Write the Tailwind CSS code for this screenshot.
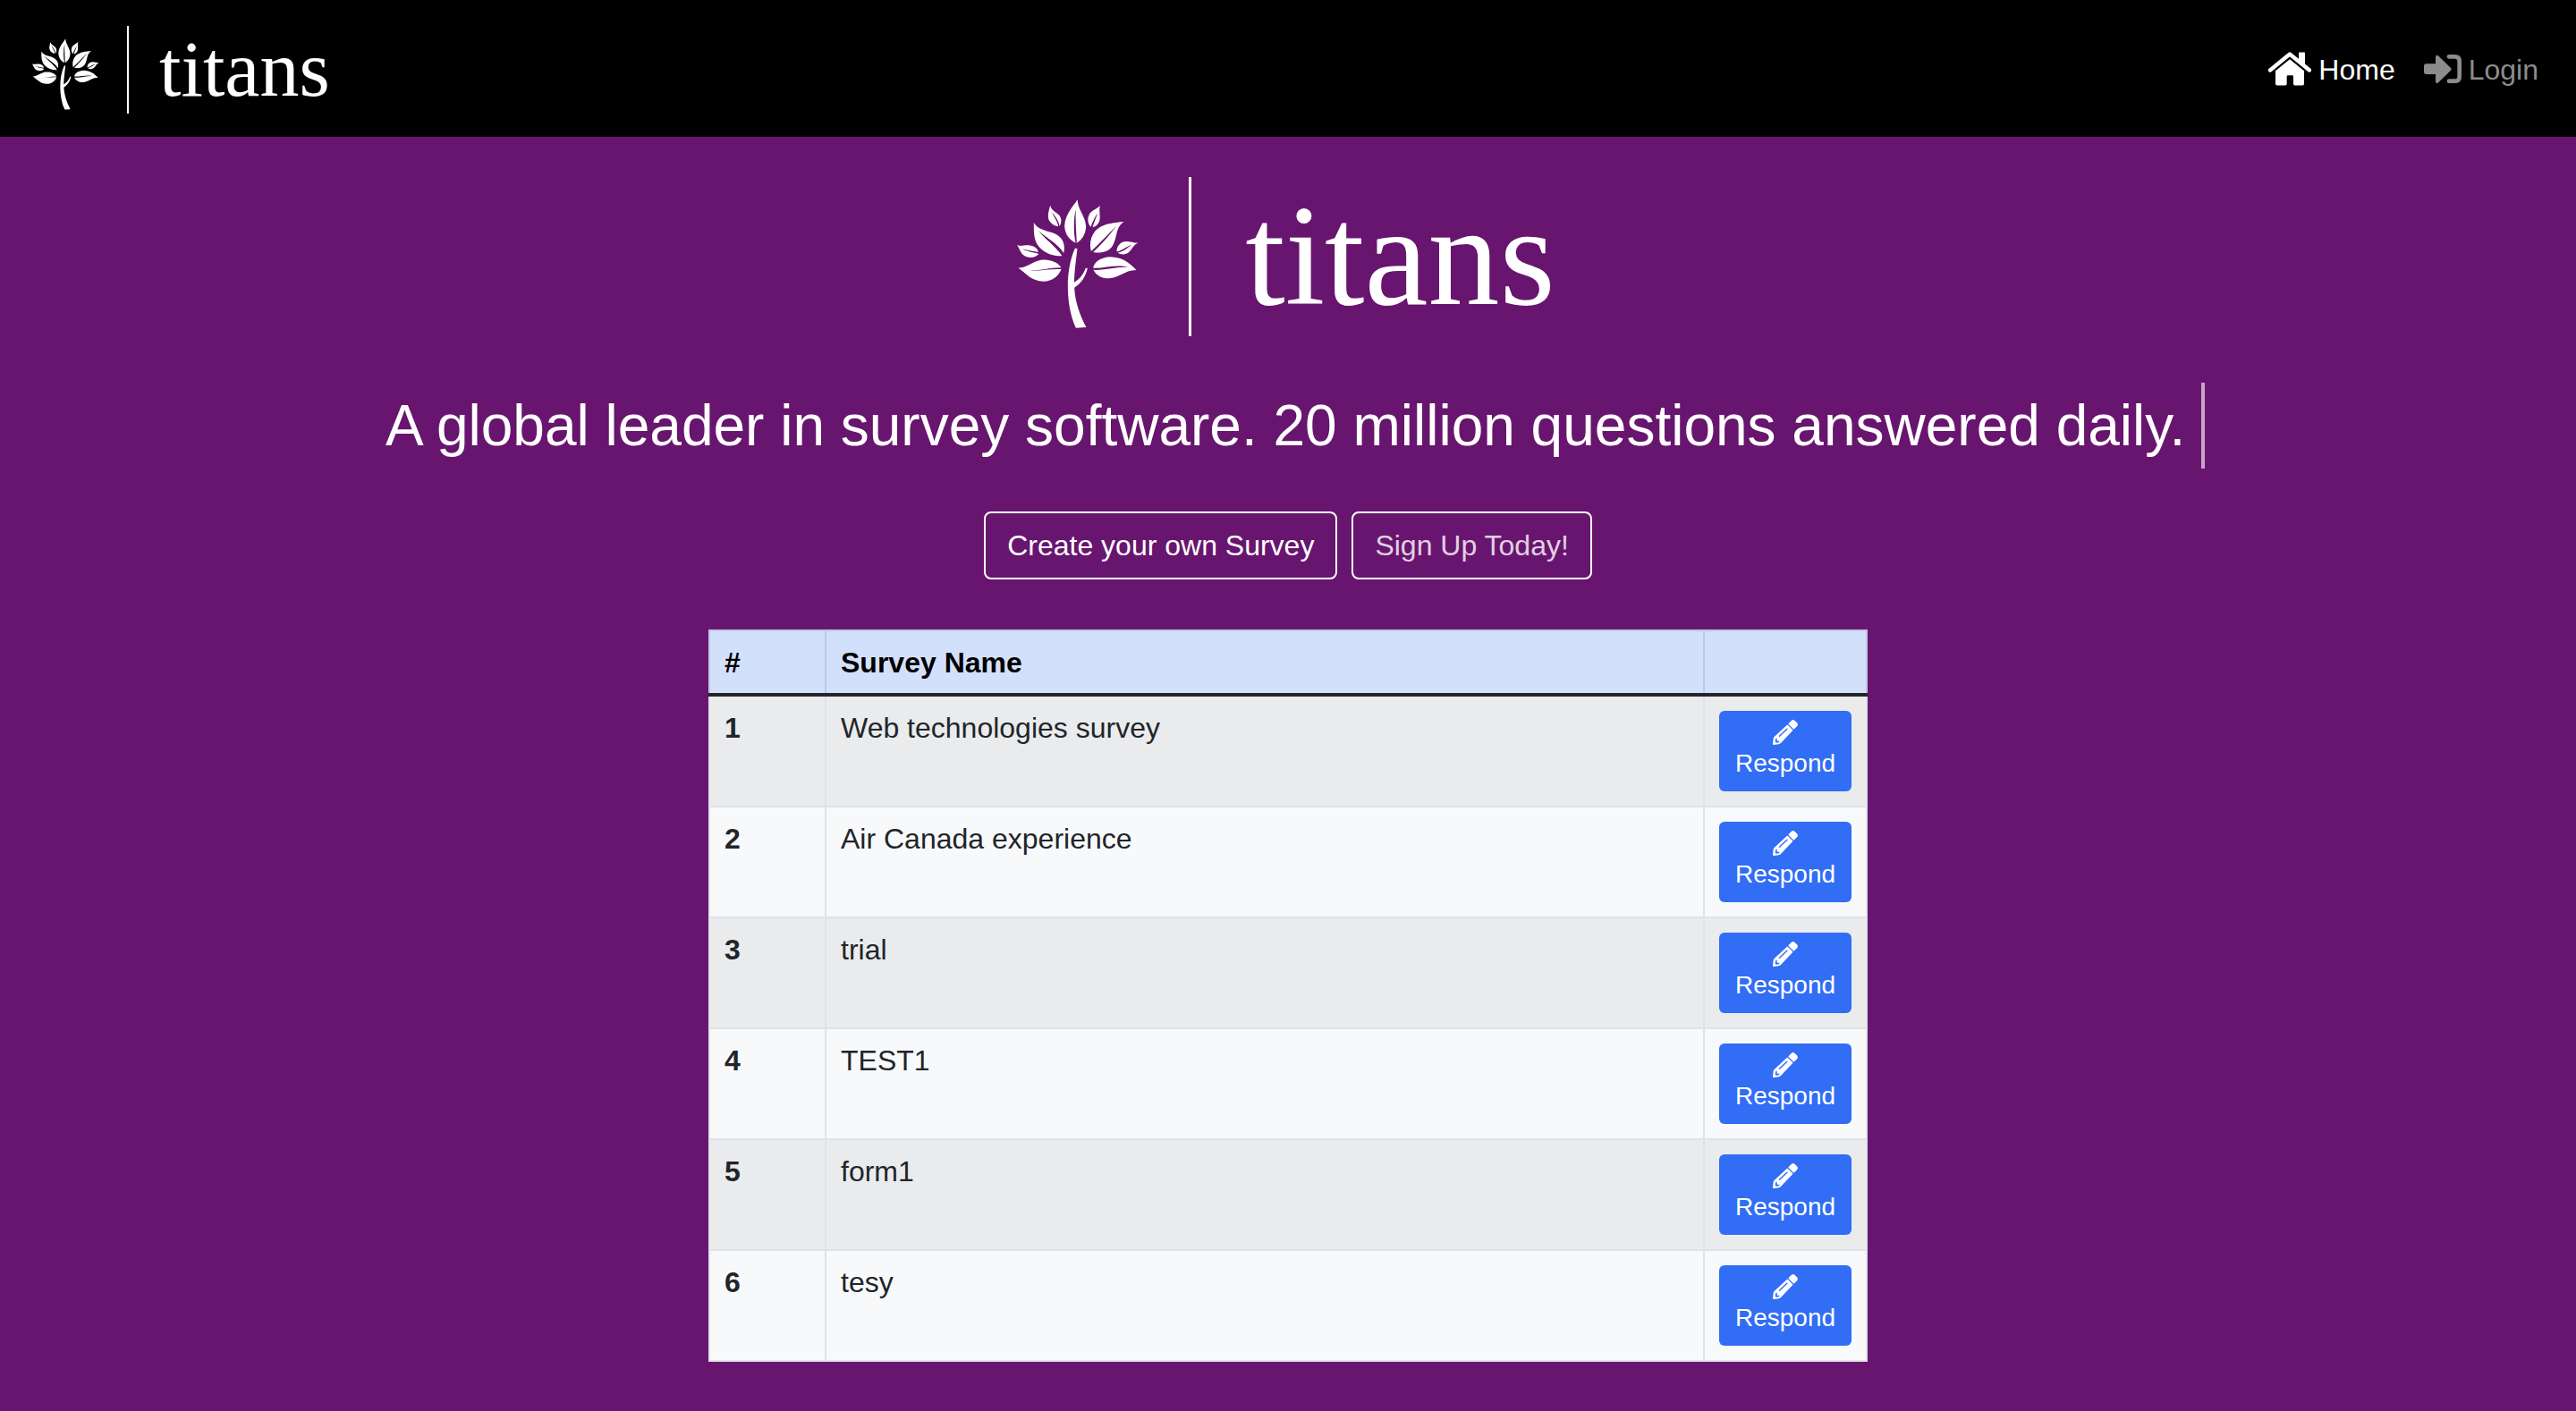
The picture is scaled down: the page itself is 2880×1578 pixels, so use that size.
<!DOCTYPE html>
<html lang="en">
<head>
<meta charset="utf-8">
<title>titans</title>
<script src="https://cdn.jsdelivr.net/npm/@tailwindcss/browser@4"></script>
</head>
<body class="min-h-screen bg-[#68156f] font-['Liberation_Sans',Arial,sans-serif] text-[32px] leading-[48px] text-[#212529]">

<svg class="hidden" aria-hidden="true">
  <symbol id="tree" viewBox="50 40 407 432">
    <g fill="#fff">
      <path d="M252 40C244 58 212 84 209 128C210 158 226 176 246 186C238 146 240 98 247 74C245 104 248 150 250 186C268 176 280 156 281 130C279 96 254 76 252 40Z"/>
      <path d="M161 60C156 78 150 98 158 112C164 122 176 129 188 131C186 112 172 98 167 84C178 96 190 112 192 130C200 118 200 104 190 92C180 82 164 76 161 60Z"/>
      <path d="M328 61C318 72 300 76 292 90C284 106 288 122 297 132C302 116 312 98 320 86C316 100 308 116 303 133C314 132 324 122 327 108C329 92 324 78 328 61Z"/>
      <path d="M106 118C106 146 104 176 124 200C144 222 172 231 201 230C180 196 138 170 122 144C142 166 186 186 206 220C212 196 206 172 182 158C156 144 122 146 106 118Z"/>
      <path d="M408 115C376 118 336 120 312 146C296 166 292 190 298 214C320 194 352 160 382 130C362 158 330 194 305 217C330 222 358 216 370 196C388 164 378 136 408 115Z"/>
      <path d="M50 193C60 208 62 226 82 233C98 238 112 234 123 223C106 218 84 216 68 206C86 212 106 214 121 217C118 200 100 194 84 194C70 194 62 198 50 193Z"/>
      <path d="M456 186C438 186 418 176 402 184C388 192 384 204 384 215C402 212 416 198 434 192C420 204 406 214 388 219C398 226 414 226 424 218C438 206 440 192 456 186Z"/>
      <path d="M54 270C84 268 98 250 130 243C162 240 188 252 198 269C160 268 118 282 82 278C120 282 160 272 198 274C190 296 170 315 138 315C98 314 80 288 54 270Z"/>
      <path d="M450 277C426 252 402 234 362 233C332 234 308 250 305 270C344 272 384 256 424 268C384 264 346 280 306 276C314 294 334 306 360 305C398 300 410 278 450 277Z"/>
      <path d="M244 204L252 205C248 240 242 280 241 318C262 306 272 290 280 270L286 271C280 300 264 322 242 336C244 384 262 432 282 469L247 471C228 430 220 380 220 330C220 284 228 240 244 204Z"/>
    </g>
  </symbol>
  <symbol id="pencil" viewBox="0 0 84 84">
    <path fill="currentColor" fill-rule="evenodd" d="M53 12L63 2Q68 -2 73 2L81 10Q86 15 82 21L72 31Q70 32 69 31L53 15Q52 13 53 12ZM47 18Q49 16 51 18L66 33Q68 35 66 37L27 78Q24 81 20 82L3 84Q0 84 0 81L2 63Q2 60 5 57ZM21 53A2 2 0 0 0 24 56L49 32A2 2 0 0 0 46 29ZM10 62L8 74L12 77L22 75V71H14V62Z"/>
  </symbol>
</svg>

<header class="flex h-[153px] items-start justify-between bg-black pl-9 pr-[42px]">
  <a href="#" class="flex items-start pt-[29px] text-white">
    <svg class="mt-[14px] h-[80px] w-[75px]"><use href="#tree"/></svg>
    <span class="ml-[31px] h-[98px] w-[2px] bg-white"></span>
    <span class="ml-[34px] font-['Liberation_Serif',serif] text-[88px] leading-[98px]">titans</span>
  </a>
  <nav class="flex gap-8 pt-[54px]">
    <a href="#" class="flex items-start gap-2 text-white">
      <svg class="mt-1 h-[38px] w-[48px]" viewBox="105 85 144 113" fill="none">
        <path d="M111 146L177 92L243 146" stroke="#fff" stroke-width="13" stroke-linecap="round" stroke-linejoin="round"/>
        <path d="M207 88Q207 86 209 86H226Q228 86 228 88V134L207 117Z" fill="#fff"/>
        <path d="M177 109L225 148V192Q225 197 220 197H194Q189 197 189 192V167Q189 163 185 163H171Q167 163 167 167V192Q167 197 162 197H134Q129 197 129 192V148Z" fill="#fff"/>
      </svg>
      <span>Home</span>
    </a>
    <a href="#" class="flex items-start gap-2 text-[#8c8c8c]">
      <svg class="mt-[7px] h-[32px] w-[42px]" viewBox="630 93 126 96" fill="none">
        <path d="M638 124H669V101Q670 94 677 96L720 138Q723 142 720 146L677 188Q670 191 669 184V159H638Q630 159 630 151V132Q630 124 638 124Z" fill="currentColor"/>
        <path d="M714 100H734Q749 100 749 115V167Q749 182 734 182H714" stroke="currentColor" stroke-width="14" stroke-linecap="round"/>
      </svg>
      <span>Login</span>
    </a>
  </nav>
</header>

<main class="flex flex-col items-center pb-[55px] pt-[45px]">
  <div class="flex items-start pr-1 text-white">
    <svg class="mt-[25px] h-[144px] w-[136px]"><use href="#tree"/></svg>
    <span class="ml-[56px] h-[178px] w-[3px] bg-white"></span>
    <span class="ml-[60px] font-['Liberation_Serif',serif] text-[160px] leading-[176px]">titans</span>
  </div>

  <h1 class="mt-[52px] whitespace-pre border-r-4 border-[#c8a4cb] pl-4 text-[64px] leading-[96px] text-white">A global leader in survey software. 20 million questions answered daily. </h1>

  <div class="mt-12 flex gap-4">
    <button type="button" class="rounded-lg border-2 border-white px-6 py-3 text-white">Create your own Survey</button>
    <button type="button" class="rounded-lg border-2 border-white px-6 py-3 text-[#e1d0e2]">Sign Up Today!</button>
  </div>

  <table class="mt-14 w-[45%] table-fixed border-collapse text-left leading-[37px]">
    <colgroup><col class="w-[130px]"><col><col class="w-[182px]"></colgroup>
    <thead>
      <tr class="bg-[#d3e0fc] text-black *:border-2 *:border-[#bccae3] *:border-b-4 *:border-b-[#212529] *:px-4 *:pb-[15px] *:pt-[17px]">
        <th scope="col">#</th><th scope="col">Survey Name</th><td></td>
      </tr>
    </thead>
    <tbody class="*:odd:bg-[#eaebed] *:even:bg-[#f8f9fb]" id="rows">
    </tbody>
  </table>
</main>

<template id="row">
  <tr class="*:border-2 *:border-[#dfe2e7] *:px-4 *:align-top">
    <th scope="row" class="pt-[17px]"></th>
    <td class="pt-[17px]"></td>
    <td class="py-4">
      <button type="button" class="flex h-[90px] w-full flex-col items-center gap-[5px] rounded-md bg-[#316df5] pt-[10px] text-[28px] leading-8 text-white">
        <svg class="h-7 w-7 shrink-0"><use href="#pencil"/></svg>
        <span>Respond</span>
      </button>
    </td>
  </tr>
</template>
<script>
  const surveys = ["Web technologies survey", "Air Canada experience", "trial", "TEST1", "form1", "tesy"];
  surveys.forEach((name, i) => {
    const row = document.getElementById("row").content.cloneNode(true);
    row.querySelector("th").textContent = i + 1;
    row.querySelector("td").textContent = name;
    document.getElementById("rows").append(row);
  });
</script>
</body>
</html>
